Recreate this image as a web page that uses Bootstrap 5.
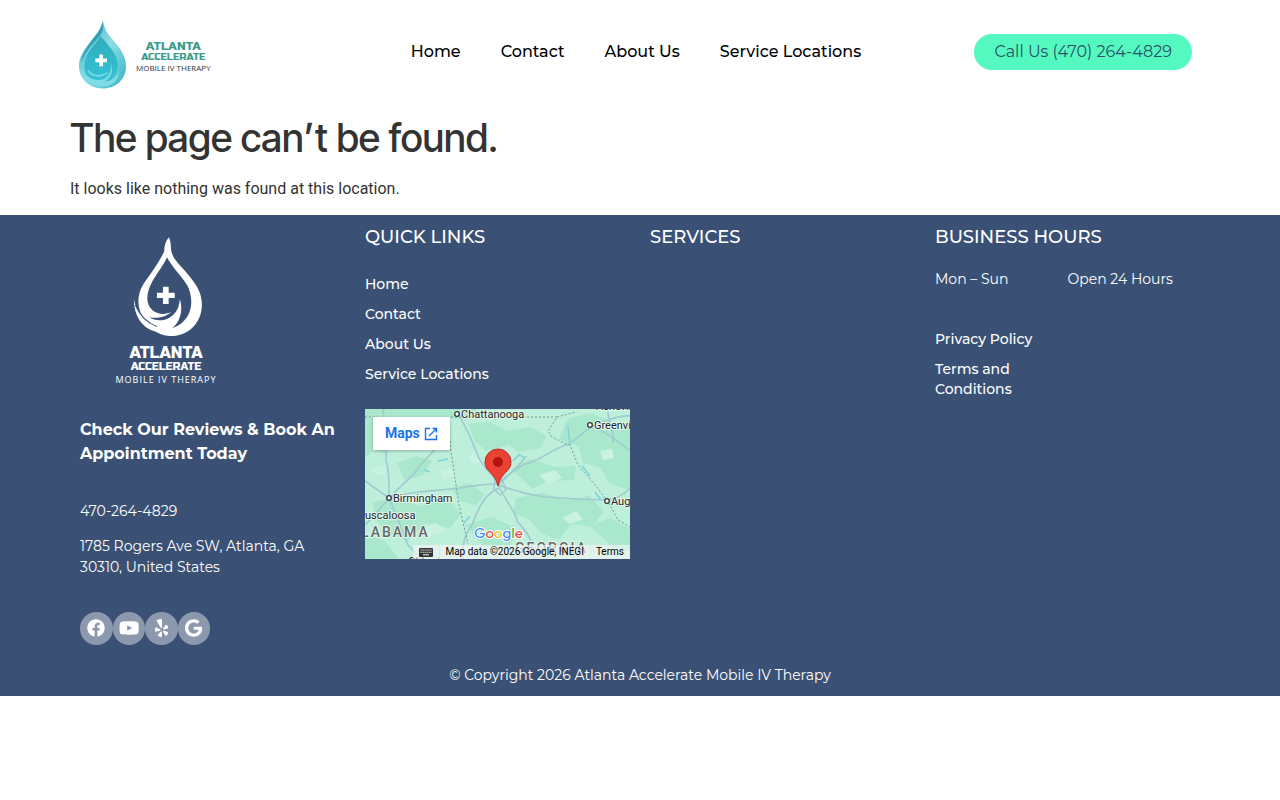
<!DOCTYPE html>
<html lang="en">
<head>
<meta charset="utf-8">
<meta name="viewport" content="width=device-width, initial-scale=1">
<title>Page not found – Atlanta Accelerate Mobile IV Therapy</title>
<link href="https://cdn.jsdelivr.net/npm/bootstrap@5.3.0/dist/css/bootstrap.min.css" rel="stylesheet">
<style>
  body { font-family: Montserrat, Inter, sans-serif; color: #333; }
  a { text-decoration: none; }
  .site-header { min-height: 104px; padding-right: 18px; }
  .site-nav { gap: 40px; margin-left: 10px; }
  .site-nav a { color: #000; font-size: 16px; font-weight: 500; line-height: 20px; white-space: nowrap; }
  .call-btn { background: #54f9c0; color: #2d5069; border-radius: 18px; font-size: 16px; line-height: 16px; padding: 10px 20px; border: 0; white-space: nowrap; }
  .call-btn:hover { background: #3fe5ab; }
  .brand-drop { width: 50px; height: 71px; }
  .brand-words { font-family: "Russo One", "Exo 2", sans-serif; font-size: 12px; color: #3d9c8b; line-height: 11px; }
  .brand-words-sm { font-size: 10px; }
  .brand-tag { font-family: "Open Sans", sans-serif; color: #333; font-size: 8px; line-height: 9px; white-space: nowrap; }
  .not-found h1 { font-family: "Inter Tight", Inter, sans-serif; font-size: 39px; font-weight: 500; line-height: 48px; margin: 10px 0 15px; }
  .not-found p { font-family: Roboto, sans-serif; font-size: 16px; line-height: 24px; margin-bottom: 14px; }
  .site-footer { background: #3a5175; color: #fff; font-size: 14px; line-height: 21px; }
  .site-footer a { color: #fff; }
  .foot-col { padding: 10px; }
  .foot-title { font-size: 18px; font-weight: 500; line-height: 24px; margin: 0; }
  .foot-links { gap: 10px; font-weight: 500; line-height: 20px; }
  .quick-links { margin-top: 25px; }
  .foot-brand { width: 172px; margin-top: 12px; }
  .foot-drop { width: 70px; height: 100px; margin-left: 4px; }
  .foot-words { font-family: "Russo One", "Exo 2", sans-serif; font-size: 16px; line-height: 16px; }
  .foot-words-sm { font-size: 11px; line-height: 12px; }
  .foot-tag { font-family: "Open Sans", sans-serif; font-size: 9px; line-height: 14px; letter-spacing: 1px; }
  .review-call { font-size: 16px; font-weight: 700; line-height: 24px; margin: 31px 0 35px; }
  .address { margin-top: 14px; }
  .socials { width: 130px; margin-top: 34px; }
  .socials a { background: #8c98ad; border-radius: 50%; aspect-ratio: 1; }
  .socials svg { height: 18px; fill: #fff; }
  .legal { width: 110px; margin-top: 39px; }
  .map-box { height: 150px; margin-top: 25px; font-family: Roboto, sans-serif; overflow: hidden; }
  .map-open { top: 8px; left: 8px; background: #fff; font-size: 14px; font-weight: 700; line-height: 33px; padding: 0 12px; box-shadow: 0 1px 3px #0004; }
  .site-footer .map-open { color: #1a73e8; }
  .map-credit { right: 0; bottom: 0; height: 14px; font-size: 10px; line-height: 14px; color: #000; white-space: nowrap; }
  .map-credit > * { background: #f5f5f5a8; padding: 0 6px; }
  .map-credit > * + * { border-left: 1px solid #d5eee3; padding-left: 5px; }
  .site-footer .map-credit a { color: #000; }
  .copyright { padding: 10px 0; }
</style>
<script src="https://cdn.jsdelivr.net/npm/bootstrap@5.3.0/dist/js/bootstrap.bundle.min.js"></script>
</head>
<body>
<header class="container-xl px-0">
  <div class="site-header row g-0 align-items-center">
    <div class="col-lg-3 ps-2">
      <a href="#" class="d-inline-flex align-items-center mt-2 pt-1" aria-label="Atlanta Accelerate home">
        <svg class="brand-drop" viewBox="24 26 150 212" aria-hidden="true">
          <defs>
            <linearGradient id="shell" x1="0" y1="0" x2="1" y2="1"><stop offset="0" stop-color="#35acc0"/><stop offset=".5" stop-color="#8edde5"/><stop offset="1" stop-color="#35b4c6"/></linearGradient>
            <linearGradient id="core" x1="0" y1="0" x2="0" y2="1"><stop offset="0" stop-color="#2fadb9"/><stop offset="1" stop-color="#35c3da"/></linearGradient>
          </defs>
          <path fill="url(#shell)" d="M99 29C103 68 128 83 148 112C162 133 168 148 168 168C168 207 137 234 98 234S27 207 27 166C27 138 42 119 61 94C78 72 91 58 99 29Z"/>
          <path fill="#2e9fb5" d="M98 32C94 59 80 70 67 88C51 110 36 132 34 158C46 119 69 100 89 77C97 66 102 55 98 32Z"/>
          <path fill="url(#core)" d="M92 77C114 102 143 131 143 163C143 198 119 219 91 219C60 219 43 195 43 167C43 130 74 104 92 77Z"/>
          <path fill="#7fdbe6" d="M122 159C126 185 113 205 93 208C64 213 39 189 34 170C32 205 63 229 98 228C133 227 149 201 147 180C141 199 124 213 104 213C123 202 132 181 122 159Z"/>
          <path fill="none" stroke="#7bd9e3" stroke-width="5" d="M54 180C68 199 91 201 113 187"/>
          <path fill="#fff" d="M88 132h11v12h12v11H99v12H88v-12H76v-11h12Z"/>
        </svg>
        <span class="d-flex flex-column align-items-center text-center ms-1 mt-1 ps-1">
          <span class="brand-words">ATLANTA</span>
          <span class="brand-words brand-words-sm">ACCELERATE</span>
          <span class="brand-tag">MOBILE IV THERAPY</span>
        </span>
      </a>
    </div>
    <nav class="col-lg-6" aria-label="Main">
      <div class="site-nav d-flex flex-wrap justify-content-center">
        <a href="#">Home</a><a href="#">Contact</a><a href="#">About Us</a><a href="#">Service Locations</a>
      </div>
    </nav>
    <div class="col-lg-3 d-flex justify-content-lg-end">
      <button type="button" class="call-btn">Call Us (470) 264-4829</button>
    </div>
  </div>
</header>

<main class="not-found container-xl px-0 overflow-hidden">
  <h1>The page can’t be found.</h1>
  <p>It looks like nothing was found at this location.</p>
</main>

<footer class="site-footer">
  <div class="container-xl px-0">
    <div class="row g-0 row-cols-1 row-cols-md-2 row-cols-lg-4">
      <div class="foot-col col">
        <div class="foot-brand d-flex flex-column align-items-center text-center">
          <svg class="foot-drop" viewBox="101 20 208 298" aria-hidden="true">
            <path fill="#fff" fill-rule="evenodd" d="M208 21C197 34 194 46 194 62C181 92 154 128 132 160C112 190 113 229 127 252C143 288 174 316 213 315C266 315 306 276 306 221C306 184 287 158 259 125C238 100 216 83 214 55C213 41 213 33 208 21ZM202 80C219 113 248 138 263 165C280 199 279 245 252 270C244 279 232 286 218 291C241 273 251 237 240 205C239 235 223 260 193 267C176 270 162 267 148 259C168 263 194 262 216 243C196 253 174 250 160 239C136 220 140 185 159 151C175 123 193 102 202 80Z"/>
            <path fill="#fff" d="M103 205C104 258 128 290 164 301C194 310 216 305 232 297C198 298 159 290 136 265C117 247 108 227 103 205Z"/>
            <path fill="none" stroke="#3a5175" stroke-width="3" d="M107 222C119 250 139 274 172 287"/>
            <path fill="#fff" d="M190 168h17v18h18v16h-18v18h-17v-18h-18v-16h18Z"/>
          </svg>
          <div class="foot-words mt-2">ATLANTA</div>
          <div class="foot-words foot-words-sm">ACCELERATE</div>
          <div class="foot-tag">MOBILE IV THERAPY</div>
        </div>
        <h2 class="review-call">Check Our Reviews &amp; Book An Appointment Today</h2>
        <p class="mb-0"><a href="#">470-264-4829</a></p>
        <p class="address mb-0 pe-3">1785 Rogers Ave SW, Atlanta, GA 30310, United States</p>
        <div class="socials d-flex">
          <a href="#" class="flex-fill d-flex align-items-center justify-content-center w-25" aria-label="Facebook"><svg viewBox="0 0 512 512"><path d="M504 256C504 119 393 8 256 8S8 119 8 256c0 123.78 90.69 226.38 209.25 245V327.69h-63V256h63v-54.64c0-62.15 37-96.48 93.67-96.48 27.14 0 55.52 4.84 55.52 4.84v61h-31.28c-30.8 0-40.41 19.12-40.41 38.73V256h68.78l-11 71.69h-57.78V501C413.31 482.38 504 379.78 504 256z"/></svg></a>
          <a href="#" class="flex-fill d-flex align-items-center justify-content-center w-25" aria-label="YouTube"><svg viewBox="0 0 576 512"><path d="M549.655 124.083c-6.281-23.65-24.787-42.276-48.284-48.597C458.781 64 288 64 288 64S117.22 64 74.629 75.486c-23.497 6.322-42.003 24.947-48.284 48.597-11.412 42.867-11.412 132.305-11.412 132.305s0 89.438 11.412 132.305c6.281 23.65 24.787 41.5 48.284 47.821C117.22 448 288 448 288 448s170.78 0 213.371-11.486c23.497-6.321 42.003-24.171 48.284-47.821 11.412-42.867 11.412-132.305 11.412-132.305s0-89.438-11.412-132.305zm-317.51 213.508V175.185l142.739 81.205-142.739 81.201z"/></svg></a>
          <a href="#" class="flex-fill d-flex align-items-center justify-content-center w-25" aria-label="Yelp"><svg viewBox="0 0 384 512"><path d="M42.9 240.32l99.62 48.61c19.2 9.4 16.2 37.51-4.5 42.71L30.5 358.45a22.79 22.79 0 0 1-28.21-19.6 197.16 197.16 0 0 1 9-85.32 22.8 22.8 0 0 1 31.61-13.21zm44 239.25a199.45 199.45 0 0 0 79.42 32.11A22.78 22.78 0 0 0 192.94 490l3.9-110.82c.7-21.3-25.5-31.91-39.81-16.1l-74.21 82.4a22.82 22.82 0 0 0 4.09 34.09zm145.34-109.92l58.81 94a22.93 22.93 0 0 0 34 5.5 198.36 198.36 0 0 0 52.71-67.61A23 23 0 0 0 364.17 370l-105.42-34.26c-20.31-6.5-37.81 15.8-26.51 33.91zm148.33-132.23a197.44 197.44 0 0 0-50.41-69.31 22.85 22.85 0 0 0-34 4.4l-62 91.92c-11.9 17.7 4.7 40.61 25.2 34.71L366 268.63a23 23 0 0 0 14.61-31.21zM62.11 30.18a22.86 22.86 0 0 0-9.9 32l104.12 180.44c11.7 20.2 42.61 11.9 42.61-11.4V22.88a22.67 22.67 0 0 0-24.5-22.8 320.37 320.37 0 0 0-112.33 30.1z"/></svg></a>
          <a href="#" class="flex-fill d-flex align-items-center justify-content-center w-25" aria-label="Google"><svg viewBox="0 0 488 512"><path d="M488 261.8C488 403.3 391.1 504 248 504 110.8 504 0 393.2 0 256S110.8 8 248 8c66.8 0 123 24.5 166.3 64.9l-67.5 64.9C258.5 52.6 94.3 116.6 94.3 256c0 86.5 69.1 156.6 153.7 156.6 98.2 0 135-70.4 140.8-106.9H248v-85.3h236.1c2.3 12.7 3.9 24.9 3.9 41.4z"/></svg></a>
        </div>
      </div>

      <div class="foot-col col">
        <h2 class="foot-title">QUICK LINKS</h2>
        <nav class="foot-links quick-links d-flex flex-column" aria-label="Quick links">
          <a href="#">Home</a><a href="#">Contact</a><a href="#">About Us</a><a href="#">Service Locations</a>
        </nav>
        <div class="map-box position-relative">
          <svg class="w-100 h-100 d-block" viewBox="0 0 265 150" preserveAspectRatio="xMidYMid slice" role="img" aria-label="Map of Atlanta, Georgia">
            <rect width="265" height="150" fill="#bdefdb"/>
            <g fill="#a9e8cd">
              <path d="M0 0H112L103 11L84 9L72 23L58 20L48 31L35 28L21 45L9 41L0 49Z"/>
              <path d="M103 15L123 13L143 22L166 18L181 27L176 39L153 43L144 36L121 42L110 32Z"/>
              <path d="M151 89L177 84L201 91L224 87L239 102L227 118L207 115L193 131L176 124L164 110L148 105Z"/>
              <path d="M7 93L35 88L53 97L83 91L96 105L85 119L61 114L43 132L23 124L12 112Z"/>
              <path d="M203 10L225 4L265 20V81L245 75L234 58L218 54L214 38L194 30Z"/>
              <path d="M86 79L105 74L120 86L111 96L95 92ZM100 116L126 108L151 119L144 139L118 137ZM32 54L52 47L67 52L57 67L39 70ZM0 125L20 132L34 150H0Z"/>
              <path d="M225 117L245 109L265 120V143L247 137ZM146 60L165 50L190 58L211 57L209 71L183 72L168 80Z"/>
            </g>
            <g fill="#c9f2e2"><path d="M74 62l12-4 5 8-12 5ZM174 66l16-5 7 8-14 6ZM103 47l10-4 5 9-10 3ZM57 120l14-6 10 7-18 7ZM235 42l12-2 2 9-11 2ZM197 109l14-7 7 8-13 5ZM10 56l12 3-5 8-11-4Z"/></g>
            <g fill="none" stroke="#7bd3d8" stroke-width="1.5"><path d="M73 52l10-2M148 52l6-6 5 2M203 17l2 20M217 57l8 10M230 83l6 8M59 61l6 2M99 114l6-7"/></g>
            <g fill="none" stroke="#9fcbd0" stroke-width="1.6" stroke-linejoin="round">
              <path d="M18 0C20 17 22 32 21 51C25 64 24 76 24 90C17 96 10 107 0 116"/>
              <path d="M24 90C42 82 72 82 95 79C111 76 126 75 133 75C139 69 149 61 159 55C170 55 186 40 204 35C213 29 222 19 231 16C242 11 254 6 265 7"/>
              <path d="M26 88C35 75 48 70 56 55C68 44 78 32 84 18"/>
              <path d="M93 4C102 20 105 26 112 44C115 57 129 65 133 76C140 91 151 103 152 112C161 123 168 128 169 150"/>
              <path d="M133 76C152 82 162 86 182 88C208 90 227 91 242 91C253 90 258 85 265 80"/>
              <path d="M134 79C119 85 112 102 107 116C99 126 97 139 98 150M24 89C31 105 36 121 43 136L56 150M0 72L24 89M231 16C237 24 248 27 265 42M243 3C244 17 250 25 248 34M133 76C142 68 153 59 161 47"/>
              <path d="M130 71l8 2 3 8-6 5-6-6Z"/>
            </g>
            <path d="M0 8H13M83 8L86 42L94 96L103 135M86 8H192L183 22L187 28L199 34L205 36L213 56L231 77L243 93L253 111L265 118M192 8L211 3" fill="none" stroke="#719c96" stroke-width="1" stroke-dasharray="2 2"/>
            <g font-family="Roboto, sans-serif" font-size="11" fill="#222" stroke="#e4f9f0" stroke-width="2" paint-order="stroke" stroke-linejoin="round">
              <text x="96" y="9">Chattanooga</text><text x="229" y="20">Greenville</text><text x="28" y="93">Birmingham</text><text x="246" y="96">Augusta</text><text x="0" y="110">uscaloosa</text><text x="50" y="156">Montgomery</text><text x="231" y="1">Asheville</text>
              <g font-size="14" font-weight="500" letter-spacing="2" fill="#666"><text x="-4" y="128">LABAMA</text><text x="150" y="144">GEORGIA</text></g>
            </g>
            <g fill="#fff" stroke="#333" stroke-width="1.3"><circle cx="92" cy="5" r="2.3"/><circle cx="225" cy="16" r="2.3"/><circle cx="24" cy="89" r="2.3"/><circle cx="242" cy="92" r="2.3"/><circle cx="47" cy="151" r="2.3"/></g>
            <path d="M133 77C130 63 120 63 120 53A13 13 0 0 1 146 53C146 63 136 63 133 77Z" fill="#ea4335" stroke="#c5221f" stroke-width="1"/>
            <circle cx="133" cy="53" r="5" fill="#b31412"/>
            <text x="109" y="129" font-family="Outfit, Poppins, Lato, sans-serif" font-size="15" stroke="#fff" stroke-width="2" paint-order="stroke"><tspan fill="#4285f4">G</tspan><tspan fill="#ea4335">o</tspan><tspan fill="#fbbc04">o</tspan><tspan fill="#4285f4">g</tspan><tspan fill="#34a853">l</tspan><tspan fill="#ea4335">e</tspan></text>
          </svg>
          <a href="#" class="map-open position-absolute d-flex align-items-center gap-1">Maps <svg width="14" height="14" viewBox="0 0 14 14" fill="none" stroke="currentColor" stroke-width="1.4" aria-hidden="true"><path d="M6 1.5H1.5v11h11V8M8.5 1.5h4v4M12.5 1.5L5 9"/></svg></a>
          <div class="map-credit position-absolute d-flex">
            <span class="d-flex align-items-center"><svg width="14" height="9" viewBox="0 0 14 9" aria-label="Keyboard shortcuts"><rect width="14" height="9" rx="1" fill="#333"/><path d="M1.5 2h11M1.5 4.2h11" stroke="#fff" stroke-width="1.1" stroke-dasharray="1.2 .8"/><path d="M4 6.8h6" stroke="#fff"/></svg></span>
            <span>Map data ©2026 Google, INEGI</span>
            <a href="#">Terms</a>
          </div>
        </div>
      </div>

      <div class="foot-col col">
        <h2 class="foot-title">SERVICES</h2>
      </div>

      <div class="foot-col col">
        <h2 class="foot-title">BUSINESS HOURS</h2>
        <div class="row g-0 mt-3 pt-1">
          <div class="col-6">Mon – Sun</div>
          <div class="col-6">Open 24 Hours</div>
        </div>
        <nav class="foot-links legal d-flex flex-column" aria-label="Legal">
          <a href="#">Privacy Policy</a><a href="#">Terms and Conditions</a>
        </nav>
      </div>
    </div>
    <p class="copyright text-center mb-0">© Copyright 2026 Atlanta Accelerate Mobile IV Therapy</p>
  </div>
</footer>
</body>
</html>
